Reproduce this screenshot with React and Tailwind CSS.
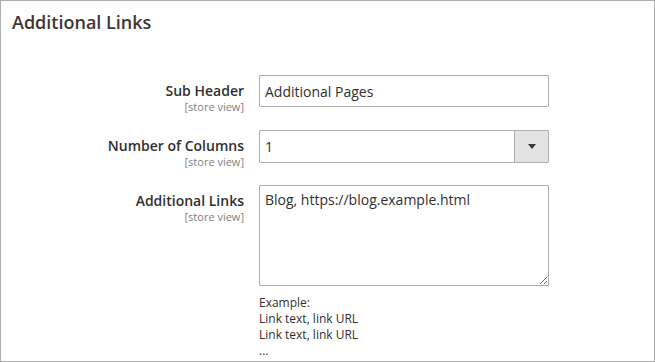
import React from "react";

const font = { fontFamily: '"Open Sans", "Noto Sans", sans-serif' };

function Label({ title }) {
  return (
    <div className="w-[243px] shrink-0 pt-[7px] text-right">
      <div className="text-[14px] leading-[18px] font-semibold text-[#303030]">{title}</div>
      <div className="text-[11px] leading-[13px] text-[#808080]">[store view]</div>
    </div>
  );
}

export default function App() {
  return (
    <div
      className="w-[655px] h-[362px] border border-[#adadad] bg-white overflow-hidden"
      style={font}
    >
      <div className="pl-[11px] pt-[9px] text-[18px] leading-[24px] font-semibold text-[#41362f]">
        Additional Links
      </div>
      <div className="mt-[41px] flex flex-col gap-[17px]">
        <div className="flex gap-[15px]">
          <Label title="Sub Header" />
          <div className="w-[290px] h-[32px] border border-[#adadad] rounded-[1px] flex items-center px-[5px] text-[14px] text-[#303030]">
            Additional Pages
          </div>
        </div>
        <div className="flex gap-[15px]">
          <Label title="Number of Columns" />
          <div className="w-[290px] h-[33px] border border-[#adadad] rounded-[1px] flex text-[14px] text-[#303030]">
            <div className="flex-1 flex items-center px-[5px]">1</div>
            <div className="w-[34px] bg-[#e3e3e3] border-l border-[#adadad] flex items-center justify-center">
              <svg width="8" height="5" viewBox="0 0 8 5">
                <polygon points="0,0 8,0 4,5" fill="#41362f" />
              </svg>
            </div>
          </div>
        </div>
        <div className="flex gap-[15px]">
          <Label title="Additional Links" />
          <div className="flex flex-col">
            <textarea
              readOnly
              defaultValue="Blog, https://blog.example.html"
              className="w-[290px] h-[101px] border border-[#adadad] rounded-[1px] px-[5px] pt-[4px] text-[14px] leading-[20px] text-[#303030] outline-none resize"
              style={font}
            />
            <div className="mt-[9px] text-[12px] leading-[16px] text-[#303030]">
              <div>Example:</div>
              <div>Link text, link URL</div>
              <div>Link text, link URL</div>
              <div>...</div>
            </div>
          </div>
        </div>
      </div>
    </div>
  );
}
